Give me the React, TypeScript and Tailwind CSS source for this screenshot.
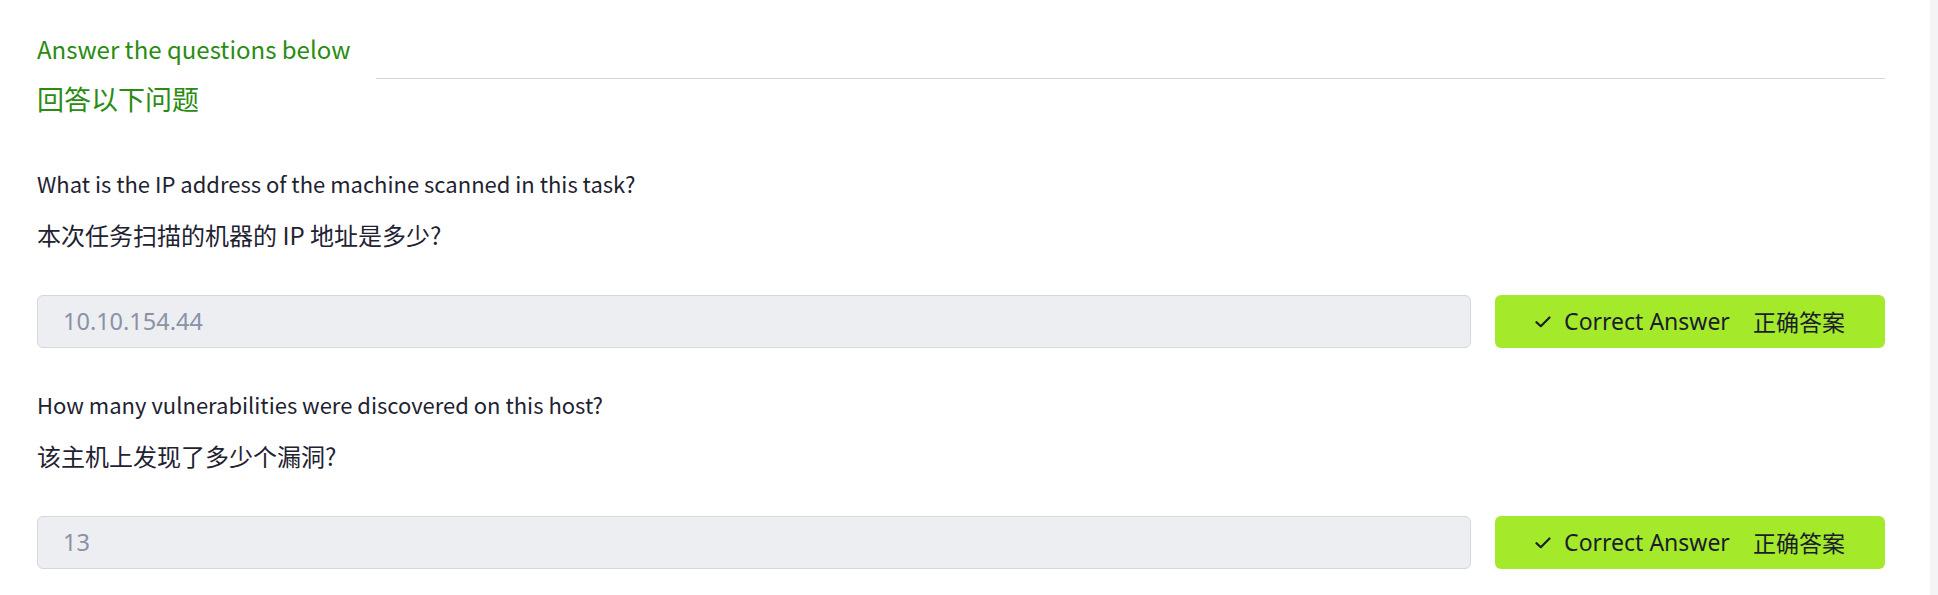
import React from "react";

const cjk = { fontFamily: '"Noto Sans CJK SC", "Noto Sans", sans-serif' };
const ui = { fontFamily: '"Noto Sans", "Noto Sans CJK SC", sans-serif' };

function Check() {
  return (
    <svg width="16" height="12" viewBox="0 0 16 12" fill="none" className="shrink-0">
      <path d="M1.5 6.2 L5.8 10.2 L14.5 1.5" stroke="#1b1d2b" strokeWidth="2.2" strokeLinecap="round" strokeLinejoin="round" />
    </svg>
  );
}

function Question({ en, zh, answer, first }: { en: string; zh: string; answer: string; first?: boolean }) {
  return (
    <div className={first ? "mt-[51px]" : "mt-[40px]"}>
      <div style={cjk} className="text-[22px] leading-[32px] text-[#1e2231]">{en}</div>
      <div style={cjk} className="mt-[20px] text-[24px] leading-[32px] text-[#1e2231]">{zh}</div>
      <div className="mt-[44px] flex gap-[24px]">
        <div className="flex h-[53px] flex-1 items-center rounded-[6px] border border-[#d4d7de] bg-[#eceef2] pl-[25px]">
          <span style={ui} className="text-[23.5px] text-[#8a92a5]">{answer}</span>
        </div>
        <div className="flex h-[53px] w-[390px] items-center justify-center rounded-[6px] bg-[#a4ea2b]">
          <Check />
          <span style={ui} className="ml-[13px] text-[23px] text-[#1b1d2b]">Correct Answer</span>
          <span style={cjk} className="ml-[23px] text-[23px] text-[#1b1d2b]">正确答案</span>
        </div>
      </div>
    </div>
  );
}

export default function App() {
  return (
    <div className="flex h-[595px] w-[1938px] overflow-hidden bg-white">
      <div className="flex-1 pl-[37px] pr-[45px] pt-[32px]">
        <div className="flex items-start gap-[26px]">
          <div style={cjk} className="shrink-0 text-[#2a8c12]">
            <div className="text-[24px] leading-[34px]">Answer the questions below</div>
            <div className="mt-[16px] text-[27px] leading-[34px]">回答以下问题</div>
          </div>
          <div className="mt-[46px] h-px flex-1 bg-[#d6d7da]" />
        </div>
        <Question
          first
          en="What is the IP address of the machine scanned in this task?"
          zh="本次任务扫描的机器的 IP 地址是多少?"
          answer="10.10.154.44"
        />
        <Question
          en="How many vulnerabilities were discovered on this host?"
          zh="该主机上发现了多少个漏洞?"
          answer="13"
        />
      </div>
      <div className="w-[8px] bg-[#f4f5f7]" />
    </div>
  );
}
